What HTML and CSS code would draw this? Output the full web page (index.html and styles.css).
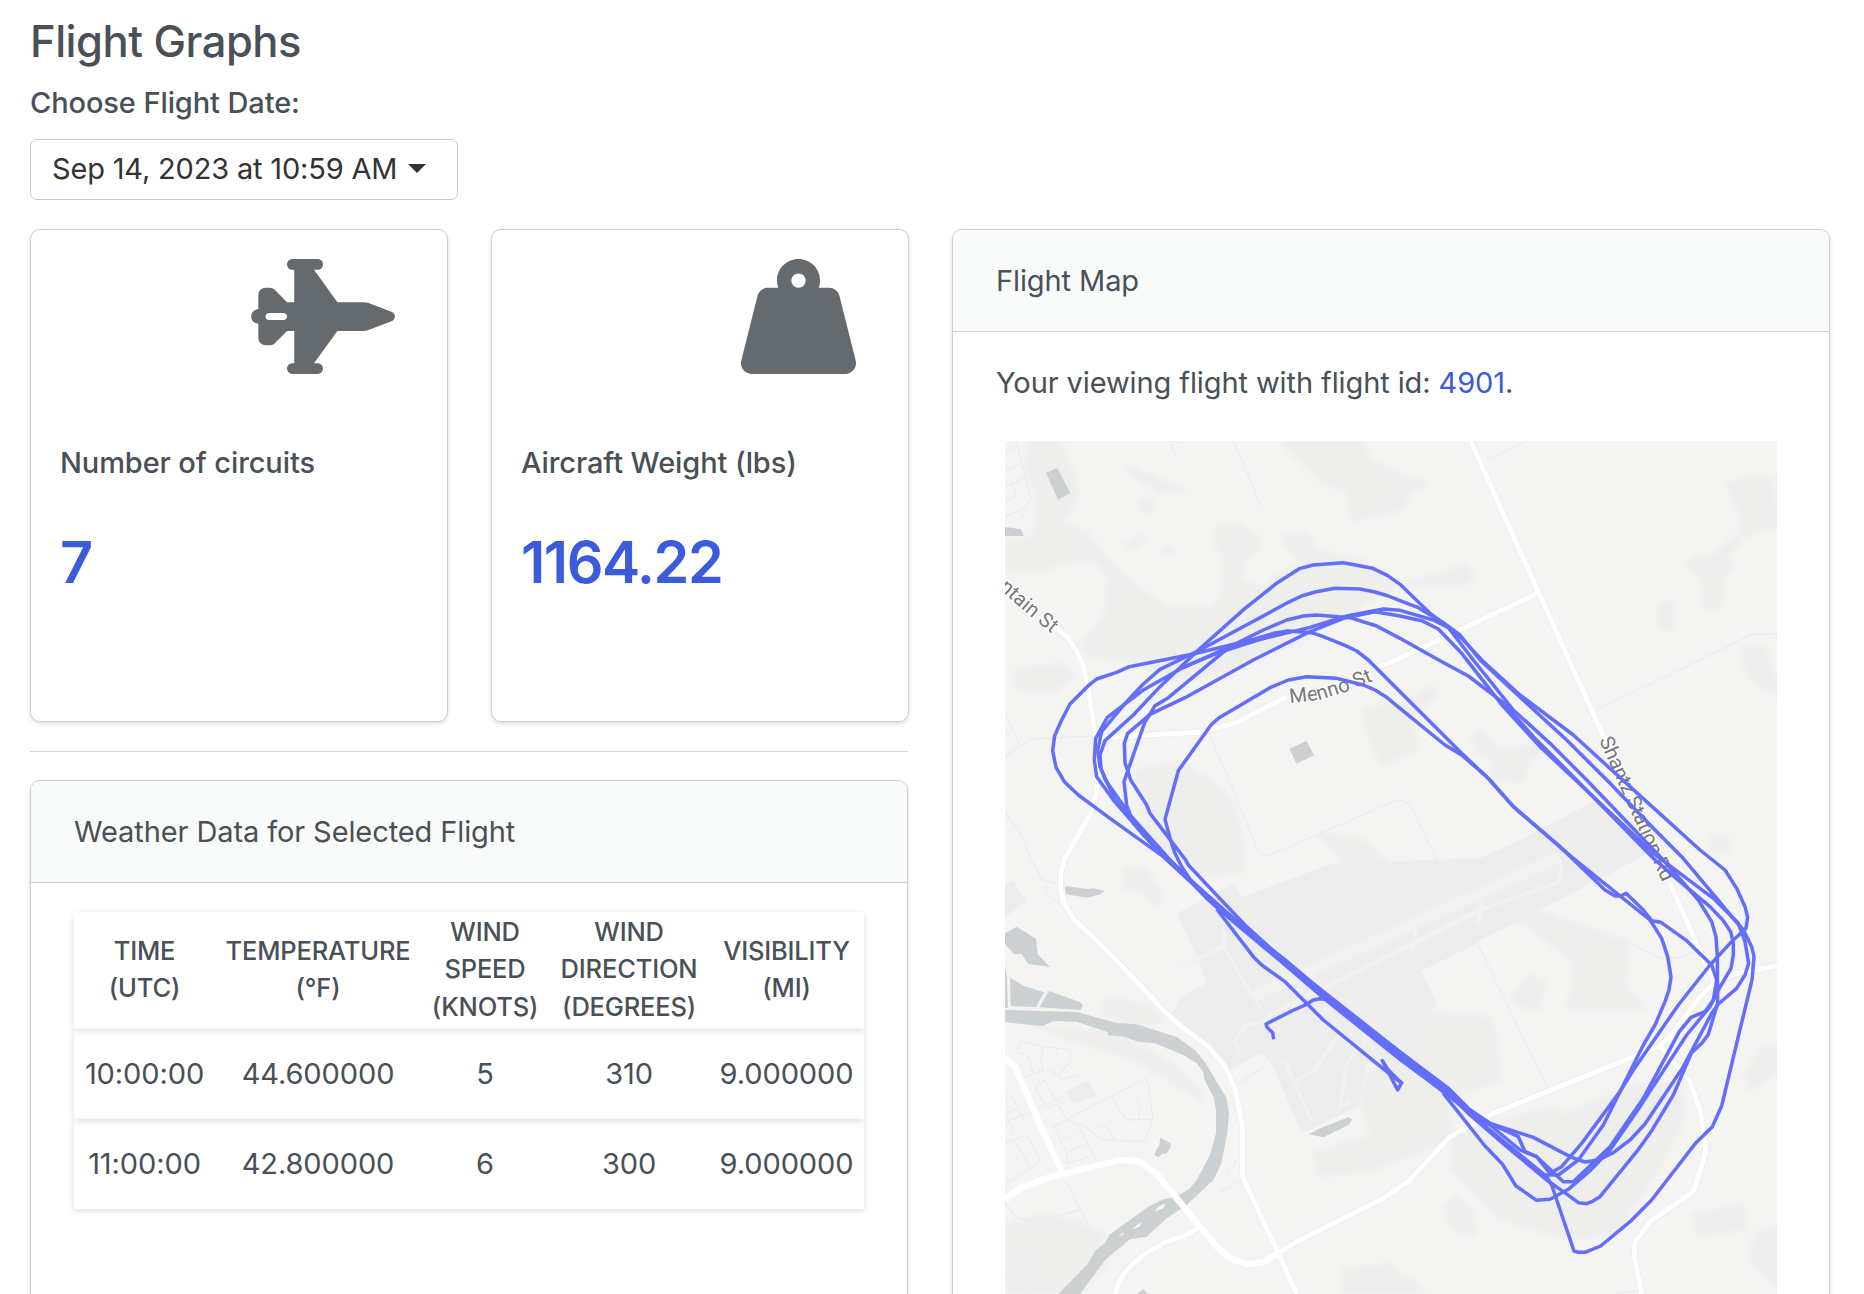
FILE: index.html
```html
<!DOCTYPE html>
<html lang="en">
<head>
<meta charset="utf-8">
<title>Flight Graphs</title>
<link rel="stylesheet" href="styles.css">
</head>
<body>
<main class="page">
  <h1 class="title">Flight Graphs</h1>
  <h2 class="subtitle">Choose Flight Date:</h2>
  <button class="dropdown" type="button"><span>Sep 14, 2023 at 10:59 AM</span><i class="caret"></i></button>

  <div class="columns">
    <div class="left">
      <div class="stats">
        <section class="card stat">
          <svg class="icon jet" viewBox="0 0 640 512"><path d="M160 24c0-13.3 10.7-24 24-24H296c13.3 0 24 10.7 24 24s-10.7 24-24 24H280L384 192H500.4c7.7 0 15.3 1.4 22.5 4.1L625 234.4c9 3.4 15 12 15 21.6s-6 18.2-15 21.6L522.9 315.9c-7.2 2.7-14.8 4.1-22.5 4.1H384L280 464h16c13.3 0 24 10.7 24 24s-10.7 24-24 24H184c-13.3 0-24-10.7-24-24s10.7-24 24-24h8V320H160l-54.6 54.6c-6 6-14.1 9.4-22.6 9.4H64c-17.7 0-32-14.3-32-32V288c-17.7 0-32-14.3-32-32s14.3-32 32-32V160c0-17.7 14.3-32 32-32H82.7c8.5 0 16.6 3.4 22.6 9.4L160 192h32V48h-8c-13.3 0-24-10.7-24-24zM80 240c-8.8 0-16 7.2-16 16s7.2 16 16 16h64c8.8 0 16-7.2 16-16s-7.2-16-16-16H80z"/></svg>
          <h3 class="stat-label">Number of circuits</h3>
          <p class="stat-value">7</p>
        </section>
        <section class="card stat">
          <svg class="icon weight" viewBox="0 0 512 512"><path d="M224 96a32 32 0 1 1 64 0 32 32 0 1 1 -64 0zm122.500 32c3.500-10 5.500-20.800 5.500-32c0-53-43-96-96-96s-96 43-96 96c0 11.200 1.900 22 5.500 32H120c-22 0-41.200 15-46.600 36.400l-72 288c-3.600 14.300-.4 29.500 8.700 41.200S33.200 512 48 512H464c14.800 0 28.700-6.800 37.800-18.500s12.300-26.800 8.700-41.200l-72-288C433.200 143 414 128 392 128H346.500z"/></svg>
          <h3 class="stat-label">Aircraft Weight (lbs)</h3>
          <p class="stat-value">1164.22</p>
        </section>
      </div>
      <hr class="rule">
      <section class="card weather">
        <header class="card-header"><span class="weather-title">Weather Data for Selected Flight</span></header>
        <table class="table">
          <colgroup><col class="c1"><col class="c2"><col class="c3"><col class="c4"><col class="c5"></colgroup>
          <thead><tr><th>Time<br>(UTC)</th><th>Temperature<br>(°F)</th><th>Wind<br>Speed<br>(Knots)</th><th>Wind<br>Direction<br>(Degrees)</th><th>Visibility<br>(mi)</th></tr></thead>
          <tbody>
            <tr><td>10:00:00</td><td>44.600000</td><td>5</td><td>310</td><td>9.000000</td></tr>
            <tr><td>11:00:00</td><td>42.800000</td><td>6</td><td>300</td><td>9.000000</td></tr>
          </tbody>
        </table>
      </section>
    </div>

    <section class="card map-card">
      <header class="card-header"><span>Flight Map</span></header>
      <p class="map-note">Your viewing flight with flight id: <a class="link">4901</a>.</p>
      <svg class="map" viewBox="15 33 2316 2559">
        <rect class="land" x="15" y="33" width="2316" height="2559"/>
        <!-- woodland -->
        <g class="wood">
          <path d="M80 33H185L200 70 235 160 235 200 190 280 260 300 320 380 380 440 500 530 640 530 665 480 670 380 640 340 645 285 720 275 790 330 780 360 735 395 730 450 790 470 850 420 910 400 850 350 850 315 920 305 960 360 1100 390 1200 470 1100 520 900 640 700 720 520 760 400 700 260 680 240 640 310 560 320 440 280 390 170 405 130 430 15 430V330L100 320 110 200 75 120Z"/>
          <path d="M840 33H1085L1110 80 1200 130 1290 160 1225 195 1220 240 1055 275 1035 190 950 150 880 80Z"/>
          <path d="M375 100 490 150 575 185 480 192 410 150 368 112ZM415 205 462 210 460 250 420 245ZM360 350 430 310 440 325 400 365ZM485 345 525 350 520 375 485 372Z"/>
          <path d="M1170 150H1260L1290 165 1225 195 1220 240H1170ZM1170 460 1280 440 1400 400 1425 440 1400 465 1220 470Z"/>
          <path d="M1210 815 1300 765 1320 785 1240 870 1260 960 1170 1000 1140 1010 1085 880 1090 830ZM1440 890 1500 960 1540 950 1620 940 1640 970 1590 990 1570 1060 1470 1050 1480 1000 1420 960 1415 910Z"/>
          <path d="M2175 160 2250 135 2320 140 2331 230V290L2240 320 2190 370 2200 420 2170 440 2170 530 2110 545 2100 440 2050 410 2100 370 2140 375 2220 300 2210 240ZM1970 520 2020 510 2025 600 1975 605ZM2225 645H2300L2310 700 2331 740V800L2260 760 2230 720ZM2125 1215H2185L2190 1270 2130 1275Z"/>
          <path d="M50 710 200 700 225 745 160 790 80 790 35 760ZM400 1020 540 990 640 1050 710 1130 740 1290 730 1330 600 1345 500 1280 430 1200ZM945 1205 1080 1220 1140 1270 1180 1300 1190 1380 1080 1400 1020 1290Z"/>
          <path d="M370 1310 440 1310 495 1400 470 1430 420 1390 360 1370ZM100 1790 300 1800 420 1840 520 1900 600 1980 620 2030 580 2000 400 1890 200 1830ZM310 1700 450 1720 490 1780 400 1790 300 1750Z"/>
          <path d="M1090 1950 1250 1740 1480 1760 1510 1950 1450 1970 1350 2020 1360 2130 1100 2230 950 2240 935 2170 1050 2130 1110 2120 1080 2030Z"/>
          <path d="M1540 1460 1620 1440 1700 1470 1890 1530 1880 1660 1940 1740 1800 1740 1700 1740 1720 1600ZM1530 1700 1590 1630 1640 1650 1620 1740 1550 1730Z"/>
          <path d="M1360 2100 1660 2030 1700 2050 1900 1960 2040 1960 2060 2060 1980 2220 1840 2420 1700 2430 1500 2370 1350 2220ZM1330 2330 1370 2290 1420 2340 1430 2420 1350 2400ZM2075 2350 2230 2320 2240 2400 2090 2420ZM2280 1850 2331 1850V1930L2245 1990 2230 1940ZM2260 2410 2331 2390V2580L2250 2500Z"/>
          <path d="M15 2380 150 2350 300 2400 350 2460 250 2592H15ZM1030 2510 1180 2500 1250 2592H1020ZM1170 2540 1230 2540 1290 2592H1170Z"/>
        </g>
        <!-- airport grounds -->
        <path class="airport" d="M530 1450 705 1362 725 1402 1000 1300 1440 1285 1560 1230 1780 1115 1900 1180 1960 1260 1870 1310 1265 1622 1310 1720 1250 1800 1270 1900 1100 1900 1075 2030 905 2110 810 1890 780 1870 690 1920 620 1840 515 1755 540 1700 620 1660 595 1590Z"/>
        <g class="airport">
          <path d="M15 1360 40 1352 80 1415 15 1460ZM195 1985 265 1952 290 1995 220 2022Z"/>
        </g>
        <g class="runway">
          <path class="wide" d="M760 1700 1680 1280"/>
          <path d="M800 1760 1440 1440 1680 1355 1685 1310 1670 1275M670 1550 780 1735M670 1490V1550L510 1622M705 1830 735 1790 800 1770M705 1830 720 1875M855 1895 935 2075M890 1950 940 1925 1010 1825M1100 1830 1040 1900 1020 2030 1050 2015M1440 1410 1445 1445 1430 1480M1245 1500 1248 1530 1235 1560"/>
        </g>
        <!-- minor streets and boundaries -->
        <g class="minor">
          <path d="M50 33 92 205 75 235 15 260M15 65 55 48M15 122 66 97M15 172 77 142M15 215 47 198 44 183 33 160M60 242 73 265M508 33 528 85M512 48 550 33M700 33 787 237M1458 90 1580 33M1790 840 2255 614 2331 610"/>
          <path d="M15 850 60 945M15 980 92 927 285 918M15 915 35 905M15 1145 60 1210 95 1290M630 915 780 1275 800 1280 1180 1115 1210 1110 1230 1125 1310 1290 1350 1312 1420 1295M80 1260 125 1348 168 1360M140 1365 138 1390 168 1415"/>
          <path d="M1430 1530 1610 1450 1700 1480 1820 1535 1880 1535 1980 1585 2030 1585 2100 1560M1430 1535 1645 1978M710 1965 800 1905M655 2290 720 2250M680 2230 710 2190M1260 1620 1430 1540"/>
          <path d="M50 1860 60 1832 130 1850 210 1858 212 1895 170 1940M50 1865 85 1880 100 1930M70 1945 130 1920 155 1922 185 1950 235 1935M130 1920 122 1890 130 1850M170 1855V1885M108 1965 135 1952 200 2070 235 2085 288 2190M110 1965 108 1985 145 2035 190 2015M15 2080 190 2000M160 2090 235 2050 435 1945 445 1960 458 2065 435 2135 310 2130 240 2080M160 2085 200 2170 205 2200 270 2180M330 1995 380 2070 458 2068M345 2070 290 2095M410 2000 420 2030 415 2065M320 2085 345 2130M180 2130 250 2100M200 2170 265 2135M15 2000 35 1998 70 2070M15 2050 55 2035M20 2060 40 2105M15 2140 80 2115 90 2130 118 2190 110 2205 15 2265M45 2135 90 2210M35 2195 55 2180"/>
          <path d="M200 2255 225 2310 295 2440M15 2315 45 2360 75 2370 165 2360 240 2340M140 2370 150 2395 175 2398 255 2370M15 2460 60 2490 90 2470 118 2490 120 2515 90 2540 60 2490 20 2560M15 2530 80 2592M1850 2592 1920 2580"/>
        </g>
        <!-- water and buildings -->
        <g class="water">
          <path d="M138 128 172 114 211 190 174 209ZM15 291 63 297 71 318H15ZM868 956 919 933 942 976 890 1001Z"/>
          <path d="M194 1372 200 1369 262 1377 280 1375 300 1380 316 1382 300 1393 262 1403 198 1393ZM15 1510 50 1490 108 1526 113 1573 150 1611 85 1602 65 1572 42 1573 15 1542ZM15 1610 20 1630 24 1735H15ZM30 1643 72 1668 132 1687 108 1732 32 1728ZM147 1683 240 1716 249 1725 242 1740 118 1732Z"/>
          <path d="M15 1740 230 1746 350 1779 410 1783 530 1821 585 1860 615 1897 680 2005 687 2050 682 2110 665 2197 640 2250 560 2325 500 2365 440 2420 390 2428 315 2490 240 2592H175L265 2500 285 2463 315 2440 330 2413 445 2330 490 2308 530 2300 570 2275 590 2250 630 2175 648 2110V2040L640 2000 613 1948 610 1927 590 1900 550 1875 465 1840 415 1835 370 1820 323 1816 325 1807 230 1775 160 1773 128 1788 15 1777Z"/>
          <path d="M481 2123 512 2140 513 2150 500 2170 485 2172 475 2182 463 2175 470 2158 478 2145ZM926 2113 960 2095 1045 2062 1058 2068 1045 2085 970 2122ZM410 2592 430 2578 445 2592Z"/>
        </g>
        <g class="island"><path d="M462 2345 478 2328 498 2320 490 2335ZM398 2398 410 2385 428 2377 415 2392ZM355 2418 372 2406 368 2416Z"/></g>
        <!-- roads -->
        <g class="casing">
          <path d="M165 590 200 620 228 660 248 700 265 775 287 925 295 1010 290 1090 272 1150 195 1285 183 1325 181 1370 190 1415 222 1470 310 1550 495 1745 540 1787 625 1850 675 1910 705 1975 727 2085V2235L737 2262 835 2470 890 2592"/>
          <path d="M287 925 610 905 712 877 860 800M1130 712 1190 690 1365 607 1616 488M1412 33 1616 488 1820 940M2010 1360 2142 1658 2100 1700 2010 1820 1980 1848 1480 2050 1410 2085 1350 2120 1225 2255 1145 2308 890 2435 835 2470M2142 1658 2200 1633 2331 1607M1980 1848 2070 1955 2100 2040 2118 2165 2080 2285 1950 2375 1905 2435 1903 2480 1925 2592M345 2592 355 2560 380 2520 435 2470 500 2435 555 2417 595 2393"/>
        </g>
        <g class="road">
          <path d="M165 590 200 620 228 660 248 700 265 775 287 925 295 1010 290 1090 272 1150 195 1285 183 1325 181 1370 190 1415 222 1470 310 1550 495 1745 540 1787 625 1850 675 1910 705 1975 727 2085V2235L737 2262 835 2470 890 2592"/>
          <path d="M287 925 610 905 712 877 860 800M1130 712 1190 690 1365 607 1616 488M1412 33 1616 488 1820 940M2010 1360 2142 1658 2100 1700 2010 1820 1980 1848 1480 2050 1410 2085 1350 2120 1225 2255 1145 2308 890 2435 835 2470M2142 1658 2200 1633 2331 1607M1980 1848 2070 1955 2100 2040 2118 2165 2080 2285 1950 2375 1905 2435 1903 2480 1925 2592M345 2592 355 2560 380 2520 435 2470 500 2435 555 2417 595 2393"/>
          <path class="main" d="M15 1882 45 1910 125 2095 190 2232M15 2308 60 2275 140 2245 190 2232 360 2190 418 2194 470 2232 650 2450 690 2485 742 2503 790 2497 835 2470"/>
        </g>
        <!-- road names -->
        <defs>
          <path id="n1" d="M-4 474 50 524 90 558 162 616"/>
          <path id="n2" d="M870 820 960 810 1040 785 1126 750"/>
        </defs>
        <g class="names">
          <text><textPath href="#n1" textLength="210">ntain St</textPath></text>
          <text><textPath href="#n2" textLength="260">Menno St</textPath></text>
          <text transform="translate(1797 930) rotate(66)" textLength="468">Shantz Station Rd</text>
        </g>
        <!-- flown track -->
        <g class="track">
          <path d="M490 1280 330 1165 235 1095 193 1055 168 1012 158 962 164 917 185 870 210 822 265 767 290 747 350 727 388 710 580 672 760 628 820 610 865 603 935 608 970 620 1035 646 1070 663 1105 690 1200 785 1385 970 1470 1050 1540 1130 1720 1285 1950 1470 1985 1525 2003 1580 2013 1640 2007 1680 1995 1715 1965 1785 1930 1845 1860 1985 1745 2140 1685 2210 1650 2230 1610 2180 1575 2165 1555 2120 1470 2080 1405 2040 1345 1980 1190 1862 990 1703 700 1470 490 1280"/>
          <path d="M1405 2045 1330 1985 1200 1888 980 1712 850 1600 700 1475 620 1405 510 1290 390 1155 316 1050 303 1015 300 975 315 932 400 855 480 770 595 660 735 535 832 458 898 416 940 405 1030 398 1118 415 1162 436 1200 463 1290 550 1345 590 1385 625 1450 695 1560 795 1720 915 1890 1070 2100 1260 2175 1320 2210 1375 2235 1430 2243 1462 2238 1495 2190 1540 2130 1605 2035 1725 1900 1920 1860 1985 1810 2085 1735 2190 1675 2235 1630 2235 1545 2165 1405 2045"/>
          <path d="M1400 2045 1335 1980 1170 1855 960 1690 840 1585 700 1465 560 1340 430 1215 345 1110 300 1010 293 960 305 905 375 820 430 762 480 718 600 660 865 517 905 498 945 486 1005 475 1080 477 1125 486 1165 498 1200 512 1255 533 1325 575 1380 615 1440 690 1580 820 1700 930 1830 1060 1960 1195 2045 1280 2150 1405 2200 1465 2230 1500 2255 1550 2262 1580 2256 1650 2210 1840 2165 2028 2137 2090 2088 2138 1955 2310 1890 2375 1802 2448 1755 2467 1735 2467 1722 2463 1655 2265 1640 2240 1530 2150 1400 2045"/>
          <path d="M1340 2000 1325 1980 1170 1858 990 1710 850 1594 560 1345 475 1265 340 1110 290 1040 283 990 287 925 322 862 430 780 545 715 690 650 790 600 860 570 910 558 950 555 1050 563 1130 588 1200 625 1320 692 1405 738 1510 818 1600 920 1720 1040 1960 1285 2040 1355 2130 1430 2170 1472 2192 1505 2200 1540 2200 1575 2193 1615 2155 1680 2130 1730 2060 1815 1920 2030 1830 2160 1770 2222 1705 2278 1650 2308 1610 2311 1548 2268 1507 2202 1455 2148 1330 1990"/>
          <path d="M1340 1975 1190 1858 850 1590 735 1485 640 1385 565 1305 557 1290 515 1235 450 1150 440 1125 392 1050 375 998 373 940 383 910 425 875 450 853 465 827 505 803 690 650 930 592 1040 558 1150 537 1200 541 1300 570 1345 593 1420 690 1540 840 1650 940 1760 1050 1990 1290 2095 1410 2135 1475 2148 1520 2152 1580 2153 1720 2125 1813 2105 1840 2075 1868 2020 1995 1950 2110 1910 2165 1800 2300 1775 2315 1760 2321 1735 2318 1690 2285 1640 2250 1520 2150 1405 2050 1340 1975"/>
          <path d="M1345 1975 1170 1843 980 1695 850 1585 650 1430 500 1280 400 1180 380 1125 372 1055 435 875 450 853 555 803 760 690 925 607 1030 565 1125 545 1200 558 1265 572 1315 597 1385 670 1510 830 1620 950 1780 1100 1960 1270 2140 1405 2215 1480 2235 1535 2246 1600 2235 1635 2210 1675 2155 1722 2135 1750 2050 1910 1935 2082 1890 2130 1840 2168 1795 2190 1755 2196 1715 2182 1600 2122 1470 2080 1405 2035 1345 1975"/>
          <path d="M1345 1975 1180 1855 850 1590 700 1465 575 1355 545 1310 525 1270 513 1235 495 1168 535 1022 633 885 655 865 810 773 865 750 920 740 1010 745 1090 765 1125 780 1160 802 1200 835 1335 945 1385 975 1460 1040 1540 1130 1680 1250 1815 1380 1845 1398 1862 1398 1878 1390 1930 1440 1955 1472 1983 1477 2060 1532 2135 1605 2150 1650 2140 1710 2115 1745 2073 1762 2038 1805 1930 2005 1830 2150 1720 2255 1690 2255 1610 2180 1560 2160 1470 2085 1405 2045 1345 1975"/>
          <path d="M540 715 650 670 790 625 865 603"/>
          <path d="M650 1437 760 1580 785 1605 855 1655 925 1725 970 1770 1185 1945 1205 1958 1193 1980 1147 1892 1165 1920 1205 1960M985 1708 960 1706 940 1710 920 1723 875 1743 798 1782 801 1792 818 1808 821 1828"/>
        </g>
      </svg>
    </section>
  </div>
</main>
</body>
</html>
```
FILE: styles.css
```css
* { box-sizing: border-box; }
html { overflow: hidden; }
body {
  margin: 0;
  height: 1294px;
  overflow: hidden;
  background: #fff;
  color: #495057;
  font-family: Inter, "Liberation Sans", sans-serif;
  font-size: 29px;
  letter-spacing: -.1px;
  line-height: 44px;
}
.page { height: 1294px; overflow: hidden; padding: 16px 34px 0 30px; }
.title, .subtitle, .stat-label, .stat-value, .map-note { margin: 0; }
.title { margin-top: -1px; font-size: 43.500px; font-weight: 500; letter-spacing: -.5px; line-height: 52px; }
.subtitle { margin-top: 18px; font-size: 29px; font-weight: 500; line-height: 36px; }
.dropdown {
  display: flex;
  align-items: center;
  gap: 11px;
  width: 428px;
  height: 61px;
  margin-top: 18px;
  padding: 0 21px 2px;
  border: 1px solid #c8cacc;
  border-radius: 7px;
  background: #fff;
  color: #333;
  font: inherit;
  letter-spacing: -.18px;
}
.caret { border: 9px solid transparent; border-top-color: #333; border-bottom: 0; }

.columns { display: grid; grid-template-columns: 878px 878px; gap: 44px; margin-top: 29px; }
.card {
  border: 1px solid #cdcfd1;
  border-radius: 10px;
  background: #fff;
  box-shadow: 0 2px 4px rgba(0, 0, 0, .13);
}
.stats { display: grid; grid-template-columns: 418px 418px; gap: 43px; }
.stat { display: flex; flex-direction: column; height: 493px; padding: 29px 29px 0; }
.icon { fill: #656a6e; align-self: flex-end; height: 115px; }
.jet { width: 144px; margin-right: 23px; }
.weight { width: 115px; margin-right: 23px; }
.stat-label { margin-top: 71px; font-size: 29px; font-weight: 500; line-height: 36px; }
.stat-value { margin-top: 46px; color: #3b5bdb; font-size: 57.500px; font-weight: 600; letter-spacing: -1.500px; line-height: 70px; }
.rule { height: 1px; margin: 29px 0 28px; border: 0; background: #d2d4d5; }
.weather { height: 700px; }
.card-header {
  display: flex;
  align-items: center;
  height: 102px;
  padding: 0 43px;
  border-bottom: 1px solid #cdcfd1;
  border-radius: 9px 9px 0 0;
  background: #f9fbfa;
}
.table { width: 790px; margin: 29px 0 0 43px; table-layout: fixed; border-collapse: collapse; text-align: center; }
.c1 { width: 141px; }
.c2 { width: 206px; }
.c3 { width: 128px; }
.c4 { width: 160px; }
.c5 { width: 155px; }
.table tr { height: 90px; box-shadow: 0 2px 7px rgba(0, 0, 0, .13); }
.table thead tr { height: 117px; }
.table th, .table td { padding: 0 0 1px; }
.table th { padding-bottom: 3px; font-size: 25.500px; font-weight: 500; letter-spacing: -.18px; line-height: 37.500px; text-transform: uppercase; }

.map-card { height: 1100px; }
.map-note { padding: 29px 43px 0; }
.link { color: #3b5bdb; }
.map { display: block; width: 772px; height: 853px; margin: 36px 0 0 52px; }
.land { fill: #f4f4f2; }
.wood { fill: #eeeeed; filter: blur(6px); }
.airport { fill: #ededee; }
.runway { fill: none; stroke: #f2f2f3; stroke-width: 11; }
.wide { stroke-width: 34; }
.minor { fill: none; stroke: #ebedec; stroke-width: 4; }
.water { fill: #cbd0d2; }
.island { fill: #f4f4f2; }
.casing, .road { fill: none; stroke-linejoin: round; }
.casing { stroke: #ebeded; stroke-width: 20; }
.road { stroke: #fff; stroke-width: 15; }
.main { stroke-width: 19; }
.names {
  fill: #777;
  stroke: #fff;
  stroke-width: 7;
  paint-order: stroke;
  font-family: Roboto, sans-serif;
  font-size: 61px;
  letter-spacing: 0;
}
.track { fill: none; stroke: #636efa; stroke-width: 10.500; stroke-linejoin: round; }
```
